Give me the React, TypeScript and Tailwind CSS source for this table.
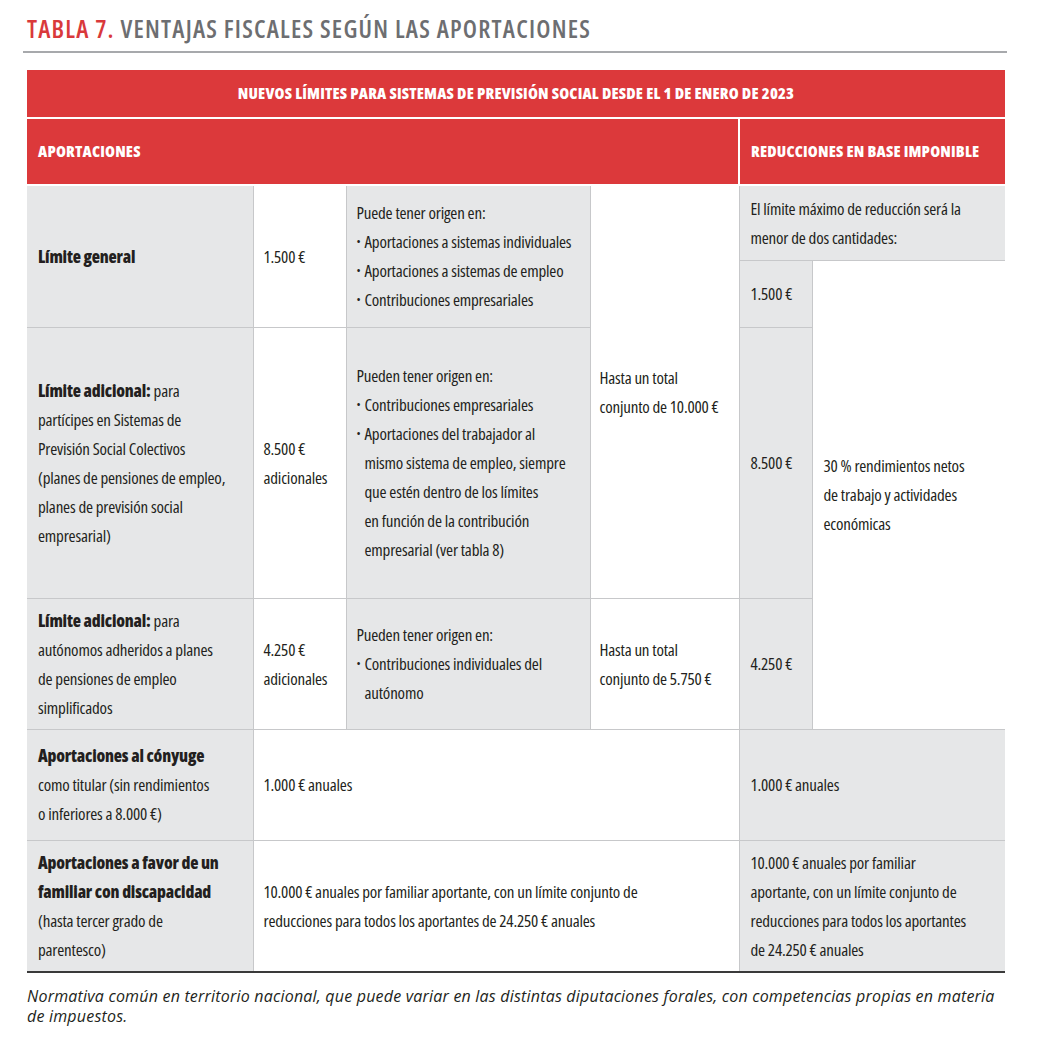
import React from "react";

const RED = "bg-[#dc393b]";
const GRAY = "bg-[#e6e7e8]";
const LINE = "border-[#c7c8ca]";

function Lines({ lines }: { lines: React.ReactNode[] }) {
  return (
    <>
      {lines.map((l, i) => (
        <div key={i} className="whitespace-nowrap">
          {l}
        </div>
      ))}
    </>
  );
}

function Bullet({ lines }: { lines: string[] }) {
  return (
    <div className="flex">
      <span className="w-[8px] shrink-0 text-[11px]">•</span>
      <div>
        <Lines lines={lines} />
      </div>
    </div>
  );
}

export default function App() {
  const cell = `border-b border-r ${LINE} align-middle`;
  const head = `${RED} text-white font-extrabold uppercase text-[16px]`;
  const bottom = "border-b-2 border-b-[#3a3a3a] align-middle";
  return (
    <div className="min-h-screen bg-white font-['Open_Sans',sans-serif] text-[#231f20]">
      <div className="pt-[13px] px-[23px] w-[1030px]">
        {/* Title */}
        <div className="border-b-2 border-[#a7a9ac] pb-[8px] pl-[4px]">
          <h1 className="font-stretch-semi-condensed font-semibold text-[25px] leading-[30px] tracking-[1.2px]">
            <span className="text-[#d9393b]">TABLA 7.</span>{" "}
            <span className="text-[#6d6e71]">VENTAJAS FISCALES SEGÚN LAS APORTACIONES</span>
          </h1>
        </div>

        {/* Table */}
        <table className="mt-[17px] ml-[4px] w-[978px] table-fixed border-collapse font-stretch-condensed text-[17px] leading-[29px] tracking-[-0.2px]">
          <colgroup>
            <col className="w-[226px]" />
            <col className="w-[93px]" />
            <col className="w-[244px]" />
            <col className="w-[149px]" />
            <col className="w-[73px]" />
            <col className="w-[193px]" />
          </colgroup>
          <tbody>
            <tr className="h-[48px]">
              <td colSpan={6} className={`${head} border-b-2 border-white text-center tracking-[0.2px]`}>
                Nuevos límites para sistemas de previsión social desde el 1 de enero de 2023
              </td>
            </tr>
            <tr className="h-[67px]">
              <td colSpan={4} className={`${head} border-b-2 border-r-2 border-white pl-[11px] tracking-[0.2px]`}>
                Aportaciones
              </td>
              <td colSpan={2} className={`${head} border-b-2 border-white pl-[11px] tracking-[0.2px]`}>
                Reducciones en base imponible
              </td>
            </tr>

            {/* Límite general */}
            <tr className="h-[75px]">
              <td rowSpan={2} className={`${cell} ${GRAY} pl-[11px] font-extrabold`}>
                Límite general
              </td>
              <td rowSpan={2} className={`${cell} bg-white pl-[10px]`}>
                1.500 €
              </td>
              <td rowSpan={2} className={`${cell} ${GRAY} pl-[10px] py-[8px]`}>
                <div>Puede tener origen en:</div>
                <Bullet lines={["Aportaciones a sistemas individuales"]} />
                <Bullet lines={["Aportaciones a sistemas de empleo"]} />
                <Bullet lines={["Contribuciones empresariales"]} />
              </td>
              <td rowSpan={3} className={`${cell} bg-white pl-[9px]`}>
                <Lines lines={["Hasta un total", "conjunto de 10.000 €"]} />
              </td>
              <td colSpan={2} className={`border-b ${LINE} ${GRAY} pl-[11px]`}>
                <Lines lines={["El límite máximo de reducción será la", "menor de dos cantidades:"]} />
              </td>
            </tr>
            <tr className="h-[67px]">
              <td className={`${cell} ${GRAY} pl-[11px]`}>1.500 €</td>
              <td rowSpan={3} className={`border-b ${LINE} bg-white pl-[11px]`}>
                <Lines lines={["30 % rendimientos netos", "de trabajo y actividades", "económicas"]} />
              </td>
            </tr>

            {/* Límite adicional colectivos */}
            <tr className="h-[271px]">
              <td className={`${cell} ${GRAY} pl-[11px]`}>
                <Lines
                  lines={[
                    <>
                      <span className="font-extrabold">Límite adicional:</span> para
                    </>,
                    "partícipes en Sistemas de",
                    "Previsión Social Colectivos",
                    "(planes de pensiones de empleo,",
                    "planes de previsión social",
                    "empresarial)",
                  ]}
                />
              </td>
              <td className={`${cell} bg-white pl-[10px]`}>
                <Lines lines={["8.500 €", "adicionales"]} />
              </td>
              <td className={`${cell} ${GRAY} pl-[10px]`}>
                <div>Pueden tener origen en:</div>
                <Bullet lines={["Contribuciones empresariales"]} />
                <Bullet
                  lines={[
                    "Aportaciones del trabajador al",
                    "mismo sistema de empleo, siempre",
                    "que estén dentro de los límites",
                    "en función de la contribución",
                    "empresarial (ver tabla 8)",
                  ]}
                />
              </td>
              <td className={`${cell} ${GRAY} pl-[11px]`}>8.500 €</td>
            </tr>

            {/* Límite adicional autónomos */}
            <tr className="h-[131px]">
              <td className={`${cell} ${GRAY} pl-[11px]`}>
                <Lines
                  lines={[
                    <>
                      <span className="font-extrabold">Límite adicional:</span> para
                    </>,
                    "autónomos adheridos a planes",
                    "de pensiones de empleo",
                    "simplificados",
                  ]}
                />
              </td>
              <td className={`${cell} bg-white pl-[10px]`}>
                <Lines lines={["4.250 €", "adicionales"]} />
              </td>
              <td className={`${cell} ${GRAY} pl-[10px]`}>
                <div>Pueden tener origen en:</div>
                <Bullet lines={["Contribuciones individuales del", "autónomo"]} />
              </td>
              <td className={`${cell} bg-white pl-[9px]`}>
                <Lines lines={["Hasta un total", "conjunto de 5.750 €"]} />
              </td>
              <td className={`${cell} ${GRAY} pl-[11px]`}>4.250 €</td>
            </tr>

            {/* Cónyuge */}
            <tr className="h-[111px]">
              <td className={`${cell} ${GRAY} pl-[11px]`}>
                <Lines
                  lines={[
                    <span className="font-extrabold">Aportaciones al cónyuge</span>,
                    "como titular (sin rendimientos",
                    "o inferiores a 8.000 €)",
                  ]}
                />
              </td>
              <td colSpan={3} className={`${cell} bg-white pl-[10px]`}>
                1.000 € anuales
              </td>
              <td colSpan={2} className={`border-b ${LINE} ${GRAY} pl-[11px]`}>
                1.000 € anuales
              </td>
            </tr>

            {/* Familiar con discapacidad */}
            <tr className="h-[132px]">
              <td className={`${bottom} border-r border-r-[#c7c8ca] ${GRAY} pl-[11px]`}>
                <Lines
                  lines={[
                    <span className="font-extrabold">Aportaciones a favor de un</span>,
                    <span className="font-extrabold">familiar con discapacidad</span>,
                    "(hasta tercer grado de",
                    "parentesco)",
                  ]}
                />
              </td>
              <td colSpan={3} className={`${bottom} border-r border-r-[#c7c8ca] bg-white pl-[10px]`}>
                <Lines
                  lines={[
                    "10.000 € anuales por familiar aportante, con un límite conjunto de",
                    "reducciones para todos los aportantes de 24.250 € anuales",
                  ]}
                />
              </td>
              <td colSpan={2} className={`${bottom} ${GRAY} pl-[11px]`}>
                <Lines
                  lines={[
                    "10.000 € anuales por familiar",
                    "aportante, con un límite conjunto de",
                    "reducciones para todos los aportantes",
                    "de 24.250 € anuales",
                  ]}
                />
              </td>
            </tr>
          </tbody>
        </table>

        {/* Nota */}
        <p className="mt-[13px] ml-[4px] italic text-[16px] leading-[20px] tracking-[0.2px] text-[#231f20]">
          Normativa común en territorio nacional, que puede variar en las distintas diputaciones forales, con
          competencias propias en materia
          <br />
          de impuestos.
        </p>
      </div>
    </div>
  );
}
